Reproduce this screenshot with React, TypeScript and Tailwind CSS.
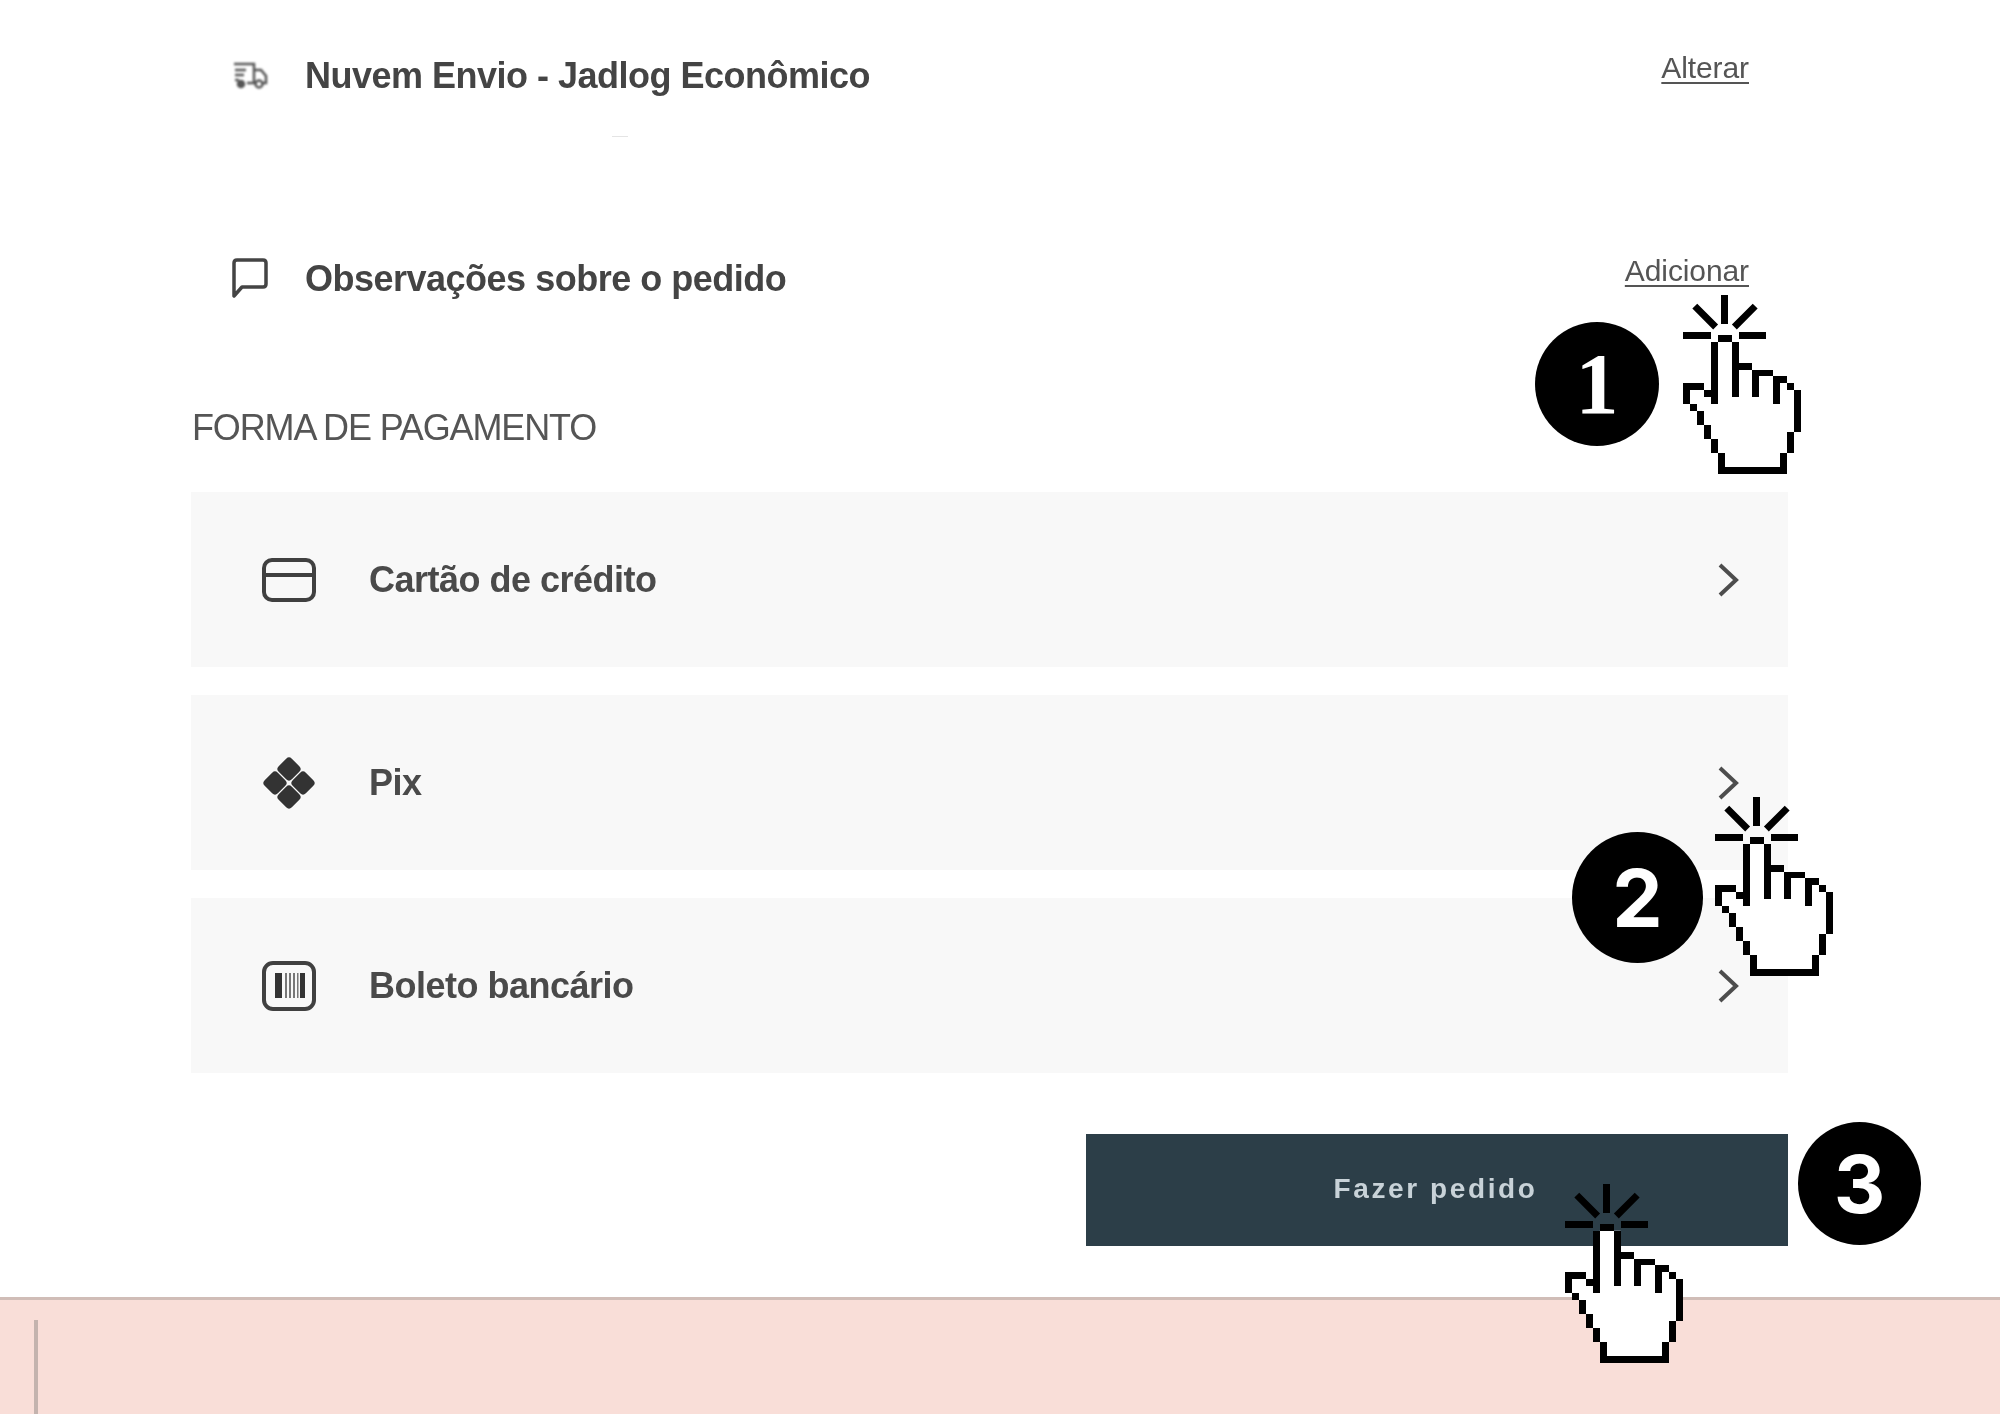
const FONT = "font-['Liberation_Sans',Arial,sans-serif]";

// [col, row, width, height] on the cursor's pixel grid
const handPixels = [
  [5, 0, 2, 1], [4, 1, 1, 9], [7, 1, 1, 8], [8, 4, 2, 1], [10, 5, 3, 1], [10, 5, 1, 4],
  [13, 6, 2, 1], [13, 6, 1, 4], [15, 7, 1, 1], [16, 8, 1, 6], [15, 14, 1, 3], [14, 17, 1, 3],
  [5, 19, 10, 1], [5, 17, 1, 3], [4, 15, 1, 2], [3, 13, 1, 2], [2, 11, 1, 2], [1, 10, 1, 1],
  [0, 7, 1, 3], [0, 7, 3, 1], [3, 8, 1, 1],
];

const HandCursor = ({ className }: { className: string }) => (
  <svg viewBox="0 -5.7 17 25.7" preserveAspectRatio="none" className={`absolute h-[179px] w-[118px] ${className}`}>
    <polygon
      points="5,1 8,1 8,5 11,5 11,6 14,6 14,7 15,7 15,8 16,8 16,14 15,14 15,17 14,17 14,19 6,19 6,17 5,17 5,15 4,15 4,13 3,13 3,11 2,11 2,10 1,10 1,8 3,8 3,9 4,9 4,10 5,10"
      fill="#fff"
    />
    <g shapeRendering="crispEdges" fill="#000">
      {handPixels.map(([x, y, w, h], i) => (
        <rect key={i} x={x} y={y} width={w} height={h} />
      ))}
      <rect x="0" y="-0.35" width="4" height="1" />
      <rect x="8" y="-0.35" width="4" height="1" />
      <rect x="5.5" y="-5.7" width="1" height="4.1" />
    </g>
    <path d="M1.7 -4.1 L4.7 -1.1 M10.4 -4.1 L7.4 -1.1" stroke="#000" strokeWidth="1" fill="none" />
  </svg>
);

const StepBadge = ({ label, className }: { label: string; className: string }) => (
  <div className={`absolute flex items-center justify-center rounded-full bg-black text-white ${className}`}>
    {label}
  </div>
);

const Chevron = () => (
  <svg viewBox="0 0 22 34" className="h-[34px] w-[22px] blur-[0.7px]" fill="none" stroke="#4d4d4d" strokeWidth="4">
    <path d="M3 2 L19 17 L3 32" />
  </svg>
);

const CardIcon = () => (
  <svg viewBox="0 0 54 44" className="h-[44px] w-[54px] blur-[0.7px]" fill="none" stroke="#404040" strokeWidth="4">
    <rect x="2" y="2" width="50" height="40" rx="8" />
    <path d="M2 17 H52" />
  </svg>
);

const PixIcon = () => (
  <svg viewBox="0 0 54 56" className="h-[56px] w-[54px] blur-[0.5px]" fill="#333">
    <rect x="17.7" y="4.7" width="18.6" height="18.6" rx="4" transform="rotate(45 27 14)" />
    <rect x="17.7" y="32.7" width="18.6" height="18.6" rx="4" transform="rotate(45 27 42)" />
    <rect x="3.7" y="18.7" width="18.6" height="18.6" rx="4" transform="rotate(45 13 28)" />
    <rect x="31.7" y="18.7" width="18.6" height="18.6" rx="4" transform="rotate(45 41 28)" />
  </svg>
);

const BarcodeIcon = () => (
  <svg viewBox="0 0 54 50" className="h-[50px] w-[54px] blur-[0.7px]" fill="none" stroke="#404040">
    <rect x="2" y="2" width="50" height="46" rx="9" strokeWidth="4" />
    <g fill="#333" stroke="none">
      <rect x="13" y="12" width="7" height="25" />
      <rect x="38" y="12" width="5" height="25" />
    </g>
    <g fill="#777" stroke="none">
      <rect x="23" y="12" width="2" height="25" />
      <rect x="27" y="12" width="2" height="25" />
      <rect x="31" y="12" width="2" height="25" />
      <rect x="35" y="12" width="1.5" height="25" />
    </g>
  </svg>
);

const TruckIcon = () => (
  <svg viewBox="0 0 36 28" className="h-[28px] w-[36px] blur-[0.8px]" fill="none" stroke="#555" strokeWidth="2.5">
    <path d="M2 3 H22 V22 H15 M22 9 H29 L34 15 V22 H31" />
    <path d="M3 9 H14 M3 14 H12 M3 19 H7" />
    <circle cx="9" cy="23" r="3" fill="#555" />
    <circle cx="27" cy="23" r="3.5" />
  </svg>
);

const CommentIcon = () => (
  <svg viewBox="0 0 36 40" className="h-[40px] w-[36px] blur-[0.7px]" fill="none" stroke="#444" strokeWidth="3.5">
    <path d="M2 38 V5 Q2 2 5 2 H31 Q34 2 34 5 V26 Q34 29 31 29 H10 Z" strokeLinejoin="round" />
  </svg>
);

const InfoRow = ({ icon, title, action, className }: { icon: React.ReactNode; title: string; action: string; className: string }) => (
  <div className={`flex h-[80px] items-center pr-[39px] pl-[41px] ${className}`}>
    <div className="flex w-[73px] shrink-0 items-center">{icon}</div>
    <span className="mt-[2px] text-[36px] leading-none font-bold tracking-[-0.5px] text-[#444] blur-[0.7px]">{title}</span>
    <a className="mb-[14px] ml-auto text-[30px] leading-none tracking-[-0.1px] text-[#555] underline decoration-2 underline-offset-4 blur-[0.7px]">
      {action}
    </a>
  </div>
);

const PaymentRow = ({ icon, label }: { icon: React.ReactNode; label: string }) => (
  <div className="flex h-[175px] items-center bg-[#f8f8f8] pr-[49px] pl-[71px]">
    <div className="flex w-[107px] shrink-0 items-center">{icon}</div>
    <span className="text-[36px] leading-none font-bold tracking-[-0.5px] text-[#4a4a4a] blur-[0.7px]">{label}</span>
    <div className="ml-auto">
      <Chevron />
    </div>
  </div>
);

export default function App() {
  return (
    <div className={`relative flex h-[1414px] w-[2000px] flex-col overflow-hidden bg-white ${FONT}`}>
      <main className="flex flex-col pt-[35px] pr-[212px] pl-[191px]">
        <InfoRow icon={<TruckIcon />} title="Nuvem Envio - Jadlog Econômico" action="Alterar" className="" />
        <InfoRow icon={<CommentIcon />} title="Observações sobre o pedido" action="Adicionar" className="mt-[123px]" />

        <h2 className="mt-[90px] ml-px flex h-[40px] items-center text-[36px] font-normal tracking-[-1.15px] text-[#555] blur-[0.7px]">
          FORMA DE PAGAMENTO
        </h2>

        <div className="mt-[44px] flex flex-col gap-[28px]">
          <PaymentRow icon={<CardIcon />} label="Cartão de crédito" />
          <PaymentRow icon={<PixIcon />} label="Pix" />
          <PaymentRow icon={<BarcodeIcon />} label="Boleto bancário" />
        </div>

        <button className="mt-[61px] flex h-[112px] w-[702px] items-center justify-center self-end bg-[#2c3e48] pr-[3px] pb-[2px] text-[28px] font-bold tracking-[2.6px] text-[#c8d2d8] blur-[0.5px]">
          Fazer pedido
        </button>
      </main>

      <footer className="mt-[51px] flex-1 border-t-[3px] border-[#d0bdb7] bg-[#f9ded8] pt-[20px] pl-[34px]">
        <div className="h-full w-[4px] bg-[#c4b3ae]" />
      </footer>

      {/* Faint speck left over under the shipping row */}
      <div className="absolute top-[136px] left-[612px] h-px w-[16px] bg-[#e4e4e4]" />

      {/* Tutorial overlay: step numbers and click cursors */}
      <StepBadge label="1" className="top-[322px] left-[1535px] h-[124px] w-[124px] font-['Liberation_Serif',serif] text-[86px] font-bold" />
      <HandCursor className="top-[295px] left-[1683px]" />
      <StepBadge label="2" className="top-[832px] left-[1572px] h-[131px] w-[131px] font-['Inter',sans-serif] text-[80px] font-bold" />
      <HandCursor className="top-[797px] left-[1715px]" />
      <StepBadge label="3" className="top-[1122px] left-[1798px] h-[123px] w-[123px] font-['Inter',sans-serif] text-[80px] font-bold" />
      <HandCursor className="top-[1184px] left-[1565px]" />
    </div>
  );
}
